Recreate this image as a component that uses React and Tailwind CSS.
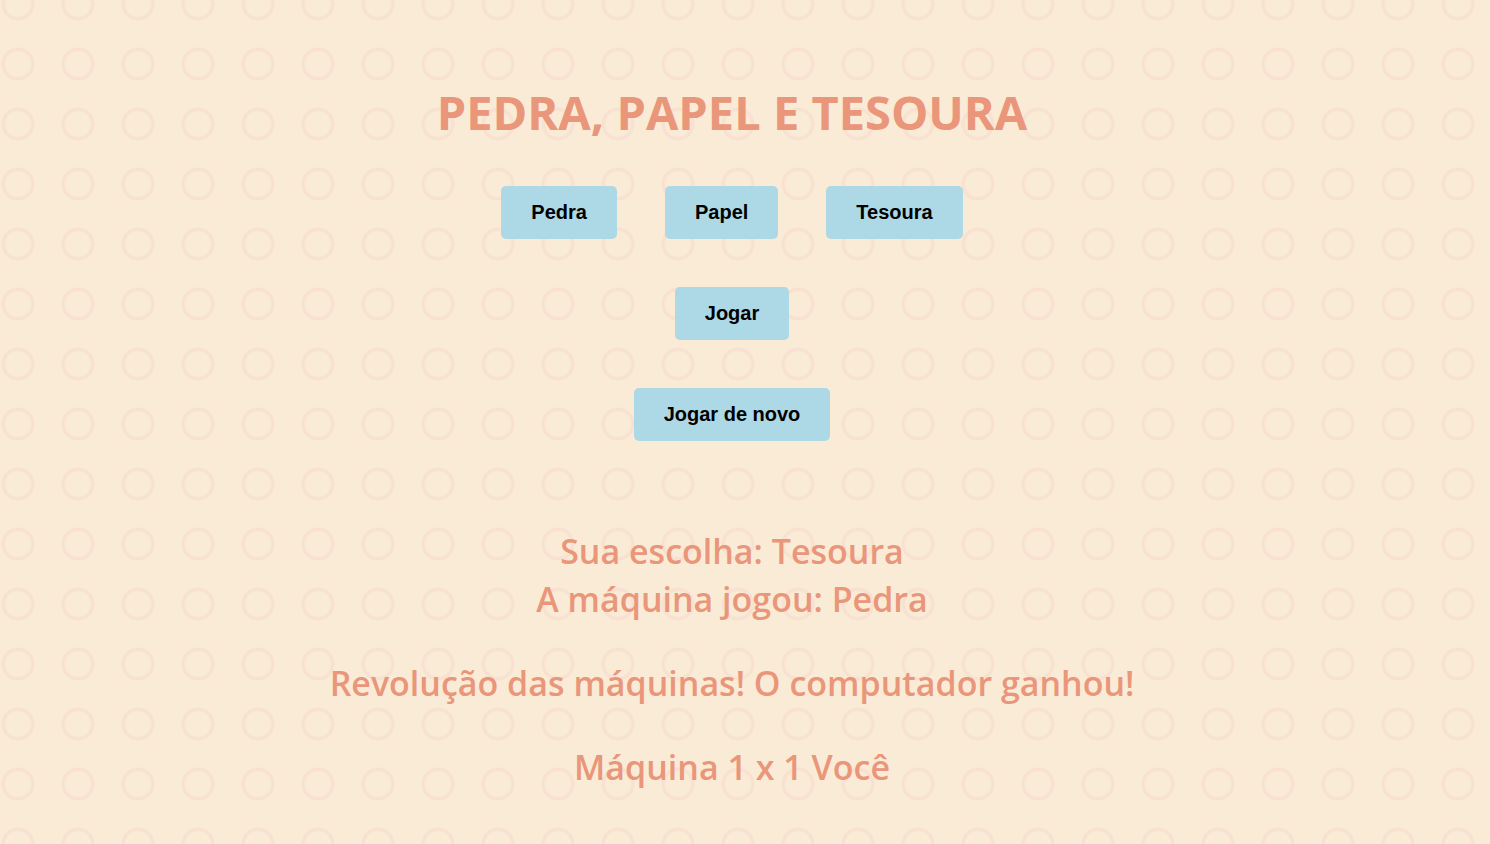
import { useState } from "react";

const choices = ["Pedra", "Papel", "Tesoura"];

function GameButton({ children, ...props }) {
  return (
    <button
      type="button"
      className="cursor-pointer rounded-[5px] bg-[#add8e6] px-[30px] py-[15px] font-['Liberation_Sans',Arial,sans-serif] text-[20px] leading-[23px] font-bold text-black"
      {...props}
    >
      {children}
    </button>
  );
}

export default function App() {
  const [choice, setChoice] = useState("Tesoura");

  return (
    <main className="flex min-h-screen flex-col items-center bg-[#faebd7] bg-[radial-gradient(circle_at_center,transparent_12px,#f8e1d0_14px,#f8e1d0_16px,transparent_17px)] bg-[size:60px_60px] bg-[position:-12px_-26px] pt-20 pr-[26px] text-center font-['Open_Sans','Noto_Sans',sans-serif] text-[#e9967a]">
      <h1 className="text-[47px] leading-[64px] font-bold">PEDRA, PAPEL E TESOURA</h1>

      <div className="mt-[42px] flex flex-col items-center gap-12">
        <div className="flex gap-12">
          {choices.map((name) => (
            <GameButton key={name} onClick={() => setChoice(name)}>
              {name}
            </GameButton>
          ))}
        </div>
        <GameButton>Jogar</GameButton>
        <GameButton>Jogar de novo</GameButton>
      </div>

      <div className="mt-[86px] flex flex-col gap-9 text-[34px] leading-[48px] font-semibold">
        <div>
          <p>Sua escolha: {choice}</p>
          <p>A máquina jogou: Pedra</p>
        </div>
        <p>Revolução das máquinas! O computador ganhou!</p>
        <p>Máquina 1 x 1 Você</p>
      </div>
    </main>
  );
}
